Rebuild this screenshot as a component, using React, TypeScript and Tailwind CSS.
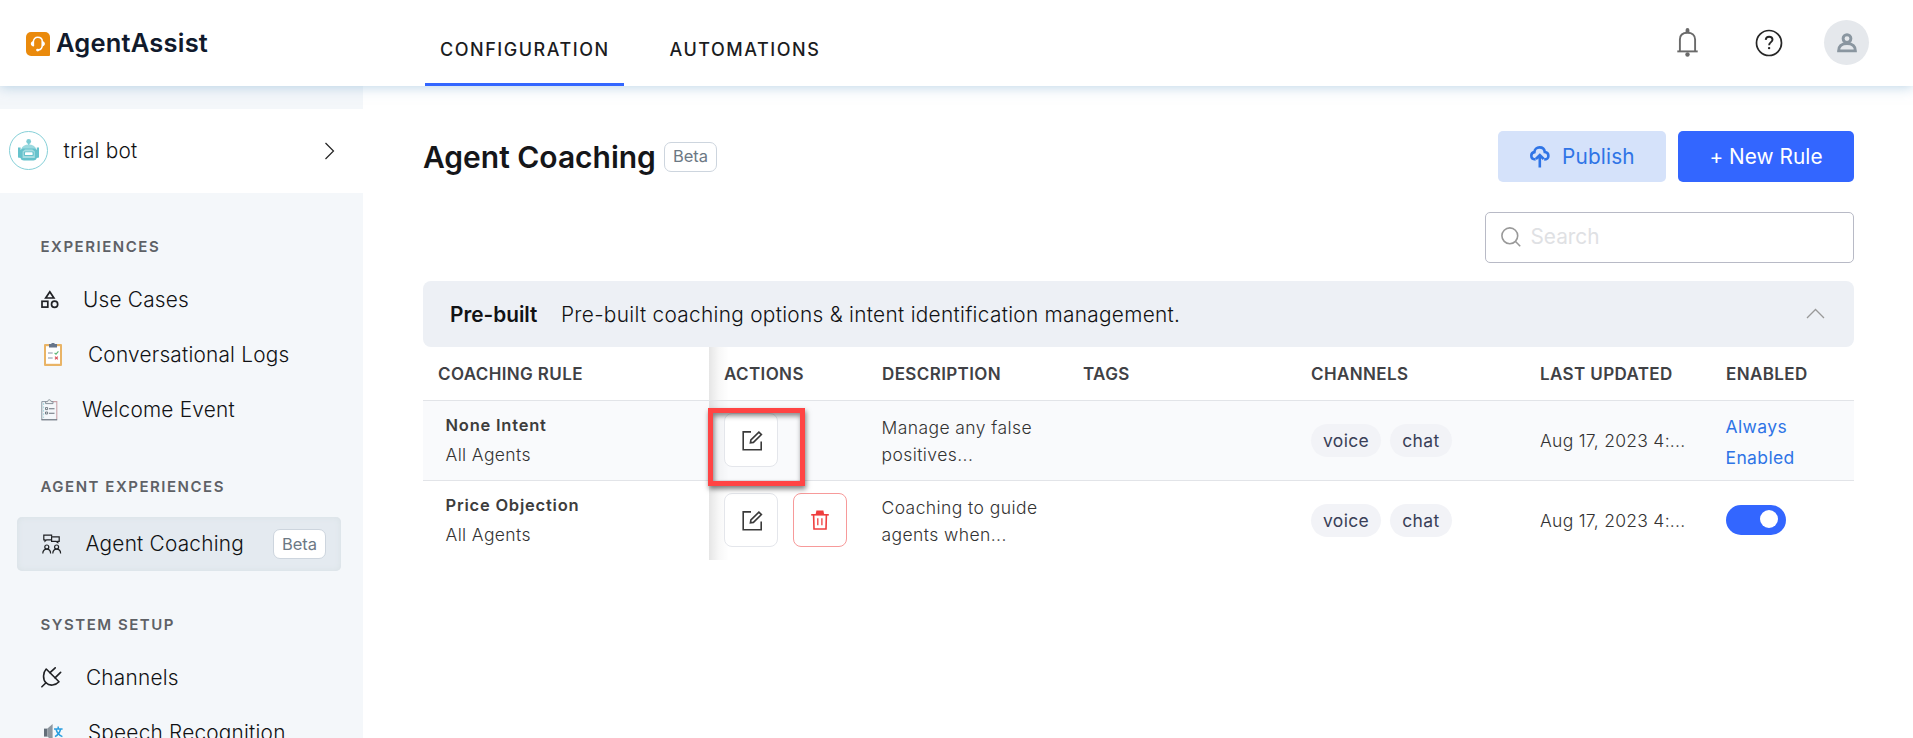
import type { ReactNode } from "react";

const Logo = () => (
  <svg width="24" height="24" viewBox="0 0 24 24" fill="none">
    <path d="M5 0H19A5 5 0 0 1 24 5V23A1 1 0 0 1 23 24H5A5 5 0 0 1 0 19V5A5 5 0 0 1 5 0Z" fill="#ea8a0c" />
    <path d="M7.4 14V9.6C7.4 6.9 9.3 5.3 11.7 5.3C14.4 5.3 16.3 7 16.3 9.6V13.2C16.3 16 14.6 17.6 12.4 18" stroke="#fff" strokeWidth="1.5" />
    <path d="M7.9 9V14.6C5.8 14.3 4.8 13.2 4.8 11.8S5.8 9.3 7.9 9ZM15.8 9V14.6C17.9 14.3 18.9 13.2 18.9 11.8S17.9 9.3 15.8 9Z" fill="#fff" />
    <ellipse cx="11.7" cy="18.1" rx="1.6" ry="1.3" fill="#fff" />
  </svg>
);

const Robot = () => (
  <svg width="22" height="22" viewBox="0 0 22 22">
    <circle cx="10.7" cy="2.5" r="2.4" fill="#7ccbd4" />
    <path d="M10 4H11.4V7H10Z" fill="#7ccbd4" />
    <path d="M3 10.5C4 7.3 7 5.6 10.7 5.6S17.4 7.3 18.4 10.5Z" fill="#9bd9df" />
    <path d="M0 8.5H2.6V11C3.6 10 4.6 9.6 6 9.6H15.4C16.8 9.6 17.8 10 18.8 11V8.5H21V18.6L18.8 19C18 21 17 21.4 15.4 21.4H6C4.4 21.4 3 21 2.6 19L0 18.6Z" fill="#66c2cc" />
    <path d="M4.6 12.5L7 10.6H14.4L16.8 12.5V19H4.6Z" fill="#a7dde2" />
    <rect x="5.8" y="12.4" width="10" height="4.6" rx="1" fill="#66c2cc" />
    <rect x="7" y="13.3" width="7.6" height="2.7" rx=".6" fill="#fff" />
  </svg>
);

const Shapes = () => (
  <svg width="18" height="19" viewBox="0 0 18 19" fill="none" stroke="#1f2124" strokeWidth="1.7">
    <path d="M8.8 1.7L12.9 8H4.7Z" />
    <rect x="1" y="11.3" width="5.8" height="5.8" />
    <circle cx="13.6" cy="14.2" r="3.1" />
  </svg>
);

const ClipboardColor = () => (
  <svg width="18" height="23" viewBox="0 0 18 23" fill="none">
    <rect x="0" y="1" width="18" height="22" rx="1" fill="#e9b466" />
    <rect x="2" y="3.2" width="14" height="17.6" fill="#fff" />
    <path d="M5 1H7.4A1.6 1.6 0 0 1 10.6 1H13V4.6H5Z" fill="#66758a" />
    <path d="M4 10H8.7M4 15H8.7" stroke="#8795a8" strokeWidth="1" />
    <path d="M10.6 10L12 11.2L14.4 8.4" stroke="#5cb577" strokeWidth="1.1" />
    <path d="M11 13.6L13.8 16.4M13.8 13.6L11 16.4" stroke="#dc5560" strokeWidth="1.2" />
  </svg>
);

const ClipboardLine = () => (
  <svg width="17" height="22" viewBox="0 0 17 22" fill="none">
    <path d="M5 2.6H.8V20.6" stroke="#8a97a2" strokeWidth="1" />
    <path d="M11.5 2.6H15.8V20.6" stroke="#c9a3a8" strokeWidth="1.1" />
    <path d="M2.6 4V19" stroke="#9fd4dc" strokeWidth=".9" strokeDasharray="2 1.4" />
    <path d="M.4 20.8H16.2" stroke="#5c6670" strokeWidth="1.1" />
    <path d="M4.6 4.6V2.6H6.6C6.8 .2 9.9 .2 10.1 2.6H12V4.6Z" stroke="#7d8790" strokeWidth=".9" fill="#eef1f3" />
    <path d="M4.5 8.6H6.6V10.6H4.5ZM4.5 13H6.6V15H4.5Z" stroke="#68727b" strokeWidth=".9" />
    <path d="M8 9.8H13.5M8 14.2H13.5" stroke="#68727b" strokeWidth="1.1" />
  </svg>
);

const Team = () => (
  <svg width="20" height="20" viewBox="0 0 20 20" fill="none" stroke="#1f2124" strokeWidth="1.2">
    <path d="M9 5.8H4.6L3 7.2V5.8H1.8V1.2H9.6V2.6" />
    <path d="M9.6 2.8H17.2V7.4H15.8V8.6L14.2 7.4H9.6Z" />
    <circle cx="4.8" cy="13" r="2" />
    <circle cx="14.6" cy="13" r="2" />
    <path d="M.8 19.6C.8 16.6 2.4 15.2 4.8 15.2S8.6 16.6 8.6 19.6M10.8 19.6C10.8 16.6 12.4 15.2 14.6 15.2S18.6 16.6 18.6 19.6" />
  </svg>
);

const Plug = () => (
  <svg width="21" height="21" viewBox="0 0 21 21" fill="none" stroke="#1f2124" strokeWidth="1.6" strokeLinecap="round">
    <path d="M5.2 2L18 14.8C14.6 18.6 8.4 19.4 5 15.8C1.6 12.4 1.8 5.6 5.2 2Z" strokeLinejoin="round" />
    <path d="M5 15.8L.9 19.8M9 5.6L14.2 .8M14 10.8L19.6 5.4" />
  </svg>
);

const SpeakerTranslate = () => (
  <svg width="20" height="20" viewBox="0 0 20 20" fill="none">
    <rect x="0" y="5.6" width="3.4" height="8" fill="#636e79" />
    <path d="M3.4 5.6L8.6 1V18L3.4 13.6Z" fill="#8e979f" />
    <path d="M10 6H18.6M14.2 3.6V6M11 13.6C14 12 15.8 9.6 16.6 6M12 6C12.8 9.6 15 12.2 18.4 13.6" stroke="#2b9fe0" strokeWidth="1.5" />
  </svg>
);

const Bell = () => (
  <svg width="21" height="29" viewBox="0 0 21 29" fill="none" stroke="#6a6a6a" strokeWidth="1.9">
    <path d="M2.9 23V11.6C2.9 7.2 6 4.8 10.5 4.8S18.1 7.2 18.1 11.6V23" />
    <path d="M.3 23.4H20.7" />
    <path d="M8.6 4.6V2A1.9 1.9 0 0 1 12.4 2V4.6Z" fill="#6a6a6a" stroke="none" />
    <ellipse cx="10.5" cy="26.5" rx="2.2" ry="2.2" fill="#6a6a6a" stroke="none" />
  </svg>
);

const Help = () => (
  <svg width="28" height="28" viewBox="0 0 28 28" fill="none" stroke="#262626">
    <circle cx="14" cy="14" r="12.5" strokeWidth="1.7" />
    <path d="M10.7 10.9C10.9 8.9 12.2 7.8 14.1 7.8C16.1 7.8 17.5 9 17.5 10.8C17.5 13 14.1 13.4 14.1 16.2" strokeWidth="1.9" />
    <circle cx="14.1" cy="19.1" r="1.2" fill="#262626" stroke="none" />
  </svg>
);

const Person = () => (
  <svg width="20" height="20" viewBox="0 0 20 20" fill="none" stroke="#8a96a0" strokeWidth="2.9">
    <circle cx="10" cy="5.6" r="3.9" />
    <path d="M1.6 17.9C1.6 13.4 4.6 10.6 10 10.6S18.4 13.4 18.4 17.9Z" />
  </svg>
);

const CloudArrow = () => (
  <svg width="20" height="22" viewBox="0 0 20 22" fill="none" stroke="#2f74e6" strokeWidth="2.6">
    <path d="M5.6 13.4C2.8 13.4 1.3 11.8 1.3 9.8C1.3 7.8 2.6 6.4 4.4 6.1C4.5 3.3 6.8 1.4 9.5 1.4C12.3 1.4 14.5 3.3 14.8 6C16.9 6.2 18.4 7.8 18.4 9.9C18.4 11.9 16.8 13.4 14.2 13.4" />
    <path d="M9.8 21.4V9.2M5.9 13L9.8 9.1L13.7 13" />
  </svg>
);

const SearchIcon = () => (
  <svg width="20" height="20" viewBox="0 0 20 20" fill="none" stroke="#999" strokeWidth="1.6">
    <circle cx="8.8" cy="8.8" r="7.9" />
    <path d="M14.3 14.3L19.2 19.2" />
  </svg>
);

const Edit = () => (
  <svg width="21" height="20" viewBox="0 0 21 20" fill="none" stroke="#3a3a3a" strokeWidth="1.6">
    <path d="M9 .9H1.2V18.8H19.2V10.6" />
    <path d="M8.4 11.8L8.9 8.8L16.9 1.1L19.4 3.6L11.4 11.4Z" />
  </svg>
);

const Trash = () => (
  <svg width="18" height="20" viewBox="0 0 18 20" fill="none" stroke="#ef3e3e" strokeWidth="1.6">
    <path d="M4.6 4.4L5.4 .6H12.4L13.2 4.4Z" fill="#ef3e3e" stroke="none" />
    <path d="M.2 4.8H17.8" />
    <path d="M2.6 4.8L3 19H15L15.4 4.8" />
    <path d="M6.8 8.2V15.2M10.9 8.2V15.2" strokeWidth="1.3" />
  </svg>
);

const Beta = () => (
  <span className="flex h-[30px] w-[53px] items-center justify-center rounded-[7px] border border-[#cdd5de] bg-white text-[16.5px] tracking-[0px] text-[#6c7884]">
    Beta
  </span>
);

const Heading = ({ className, children }: { className: string; children: string }) => (
  <h2 className={`flex h-7 items-center pl-[40.5px] text-[15px] font-semibold tracking-[1.52px] text-[#5e6166] ${className}`}>
    {children}
  </h2>
);

const Item = ({ pad, icon, label }: { pad: string; icon: ReactNode; label: string }) => (
  <a className="flex h-[55px] items-center">
    <span className={`flex shrink-0 items-center ${pad}`}>{icon}</span>
    {label}
  </a>
);

function Sidebar() {
  return (
    <aside className="w-[363px] shrink-0 overflow-hidden bg-[#f4f7fa] pt-[23px] text-[20.8px] font-light tracking-[0.22px] text-[#111214]">
      <div className="flex h-[84px] items-center bg-white pr-[28px] pb-px pl-[9px]">
        <span className="flex size-[39px] items-center justify-center rounded-full border border-[#86d0d8] pb-[2px]">
          <Robot />
        </span>
        <span className="flex-1 pl-[15.5px]">trial bot</span>
        <svg width="11" height="18" viewBox="0 0 11 18" fill="none" stroke="#222" strokeWidth="1.2">
          <path d="M1.5 1L9.5 9L1.5 17" />
        </svg>
      </div>

      <Heading className="mt-10 mb-[11px]">EXPERIENCES</Heading>
      <Item pad="w-[83px] pl-[41px]" icon={<Shapes />} label="Use Cases" />
      <Item pad="w-[88px] pl-[44px]" icon={<ClipboardColor />} label="Conversational Logs" />
      <Item pad="w-[82px] pl-[41px]" icon={<ClipboardLine />} label="Welcome Event" />

      <Heading className="mt-9 mb-4">AGENT EXPERIENCES</Heading>
      <a className="ml-[17px] flex h-[54px] w-[324px] items-center rounded-[5px] bg-[#e4eaf0] pr-[15px] shadow-[inset_0_0_6px_#d8e0e4]">
        <span className="w-[68.5px] pl-[25px]">
          <Team />
        </span>
        <span className="flex-1">Agent Coaching</span>
        <span className="font-normal">
          <Beta />
        </span>
      </a>

      <Heading className="mt-10 mb-[11px]">SYSTEM SETUP</Heading>
      <Item pad="w-[86px] pl-[41px]" icon={<Plug />} label="Channels" />
      <Item pad="w-[88px] pl-[44px]" icon={<SpeakerTranslate />} label="Speech Recognition" />
    </aside>
  );
}

const GRID = "grid grid-cols-[286px_158px_201px_228px_229px_186px_143px]";
const ACTIONS =
  "flex items-center gap-[15px] pl-[15px] bg-linear-to-r from-black/10 via-black/3 to-transparent bg-[length:20px_100%] bg-no-repeat";

const Pill = ({ children }: { children: string }) => (
  <span className="flex h-[33px] items-center rounded-full bg-[#f2f3f7] px-3 pt-px text-[17.5px] tracking-[0.35px] text-[#3a3f58]">{children}</span>
);

const EditButton = () => (
  <button className="mb-px flex size-[54px] items-center justify-center rounded-[8px] border border-[#e4e6eb] bg-white pt-px pl-[2px]">
    <Edit />
  </button>
);

function Row({ name, lines, actions, enabled, className }: {
  name: string;
  lines: [string, string];
  actions: ReactNode;
  enabled: ReactNode;
  className: string;
}) {
  return (
    <div className={`${GRID} text-[17.5px] text-[#333] ${className}`}>
      <div className="flex flex-col justify-center pb-[2px] pl-[22.5px] leading-[30px]">
        <span className="text-[16.5px] font-semibold tracking-[0.78px] text-[#3d3d3d]">{name}</span>
        <span className="font-light tracking-[0.37px]">All Agents</span>
      </div>
      <div className={ACTIONS}>{actions}</div>
      <div className="flex flex-col justify-center pl-[14.5px] leading-[27px] font-light tracking-[0.42px]">
        <span>{lines[0]}</span>
        <span>{lines[1]}</span>
      </div>
      <div />
      <div className="flex items-center gap-[9px] pl-[15px]">
        <Pill>voice</Pill>
        <Pill>chat</Pill>
      </div>
      <div className="flex items-center pt-px pl-[15px] font-light tracking-[0.28px]">Aug 17, 2023 4:...</div>
      <div className="flex flex-col justify-center pl-[14.5px]">{enabled}</div>
    </div>
  );
}

function Main() {
  return (
    <main className="min-w-0 flex-1 pt-[45px] pr-[59px] pl-[60px]">
      <div className="flex h-[51px] items-center">
        <h1 className="w-[241px] pt-[2px] text-[30px] font-semibold tracking-[-0.02px] whitespace-nowrap text-[#151619]">Agent Coaching</h1>
        <Beta />
        <div className="ml-auto flex h-full gap-3 text-[20.8px]">
          <button className="flex w-[168px] items-center rounded-[5px] bg-[#d5e2fa] pl-8 tracking-[0.15px] text-[#2f74e6]">
            <CloudArrow />
            <span className="pl-[12px]">Publish</span>
          </button>
          <button className="w-[176px] rounded-[5px] bg-[#3366ff] tracking-[0.05px] text-white">+ New Rule</button>
        </div>
      </div>

      <div className="mt-[30px] ml-auto flex h-[51px] w-[369px] items-center rounded-[5px] border border-[#b8bac6] pb-px pl-[14.5px] text-[20.8px] text-[#dfe1e4]">
        <SearchIcon />
        <span className="pl-[10px]">Search</span>
      </div>

      <section className="relative mt-[18px] w-[1431px]">
        <div className="flex h-[66px] items-center rounded-[8px] bg-[#edf0f5] pt-px pr-[29.5px] pl-[27px] text-[20.8px] text-[#111214]">
          <span className="w-[111px] font-semibold">Pre-built</span>
          <span className="flex-1 font-light tracking-[0.3px]">
            Pre-built coaching options &amp; intent identification management.
          </span>
          <svg className="mb-[2px]" width="19" height="11" viewBox="0 0 19 11" fill="none" stroke="#999" strokeWidth="1.3">
            <path d="M1 10L9.5 1.5L18 10" />
          </svg>
        </div>
        <div className={`${GRID} h-[54px] border-b border-[#e2e4e8] text-[17px] font-semibold tracking-[0.38px] text-[#404145] *:flex *:items-center *:pt-[2px] *:pl-[15px]`}>
          <div>COACHING RULE</div>
          <div className={ACTIONS}>ACTIONS</div>
          <div>DESCRIPTION</div>
          <div>TAGS</div>
          <div>CHANNELS</div>
          <div>LAST UPDATED</div>
          <div>ENABLED</div>
        </div>
        <Row
          className="h-20 border-b border-[#e2e4e8] bg-[#f9fafc]"
          name="None Intent"
          lines={["Manage any false", "positives..."]}
          actions={<EditButton />}
          enabled={
            <span className="w-20 pt-[2px] leading-[31px] tracking-[0.37px] text-[#2f74e6]">Always Enabled</span>
          }
        />
        <Row
          className="h-[79px]"
          name="Price Objection"
          lines={["Coaching to guide", "agents when..."]}
          actions={
            <>
              <EditButton />
              <button className="mb-px flex size-[54px] items-center justify-center rounded-[8px] border border-[#f79a9a] bg-white">
                <Trash />
              </button>
            </>
          }
          enabled={
            <span className="mb-px flex h-[30px] w-[60px] justify-end rounded-full bg-[#3366ff] pt-[5px] pr-2">
              <span className="size-[18px] rounded-full bg-white" />
            </span>
          }
        />
        <div className="absolute top-[127px] left-[285px] h-[78px] w-[97px] border-[5px] border-[#ff4444] shadow-[1px_3px_5px_rgba(0,0,0,0.5),inset_1px_3px_5px_rgba(0,0,0,0.45)]" />
      </section>
    </main>
  );
}

export default function App() {
  return (
    <div className="flex h-[738px] w-[1913px] flex-col overflow-hidden bg-white font-['Inter',sans-serif]">
      <header className="z-10 flex h-[86px] shrink-0 bg-white shadow-[0_1px_12px_rgba(120,170,205,0.5)]">
        <div className="flex w-[425px] items-center pl-[26px]">
          <span className="pt-[2px]">
            <Logo />
          </span>
          <span className="pl-[6px] text-[25.5px] font-semibold tracking-[0.2px] text-[#111a2c]">AgentAssist</span>
        </div>
        <nav className="flex gap-[30px] text-[18px] font-medium tracking-[1.52px] text-[#1b1c1e]">
          <a className="flex w-[199px] items-center border-b-[3px] border-[#3366ff] pt-4 pl-[15px]">CONFIGURATION</a>
          <a className="flex items-center border-b-[3px] border-transparent pt-4 pl-[15.5px]">AUTOMATIONS</a>
        </nav>
        <div className="mb-[1px] ml-auto flex items-center pr-11">
          <Bell />
          <span className="pl-[57px]">
            <Help />
          </span>
          <span className="ml-[41px] flex size-[45px] items-center justify-center rounded-full bg-[#e5e8ec]">
            <Person />
          </span>
        </div>
      </header>
      <div className="flex min-h-0 flex-1">
        <Sidebar />
        <Main />
      </div>
    </div>
  );
}
